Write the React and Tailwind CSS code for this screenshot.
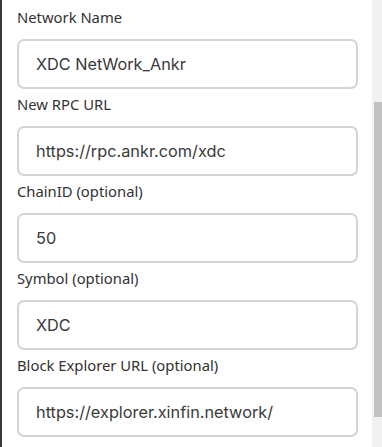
import React from 'react';

const fields = [
  { label: 'Network Name', value: 'XDC NetWork_Ankr' },
  { label: 'New RPC URL', value: 'https://rpc.ankr.com/xdc' },
  { label: 'ChainID (optional)', value: '50' },
  { label: 'Symbol (optional)', value: 'XDC' },
  { label: 'Block Explorer URL (optional)', value: 'https://explorer.xinfin.network/' },
];

export default function App() {
  return (
    <div className="flex w-[382px] h-[447px] overflow-hidden bg-white">
      <div className="w-[2px] shrink-0 bg-[#3a3a3a]" />
      <div className="flex-1 pl-[15px] pr-[14px] pt-[7px]">
        {fields.map((f, i) => (
          <div key={i} className={i > 0 ? 'mt-[5px]' : ''}>
            <div
              className="h-[20px] leading-[20px] text-[14.8px] text-[#333]"
              style={{ fontFamily: '"Noto Sans", sans-serif' }}
            >
              {f.label}
            </div>
            <div className="mt-[12px] h-[50px] rounded-[7px] border-2 border-[#d4d4d4] flex items-center pl-[17px]">
              <span
                className="text-[16.3px] text-[#3a3a3a]"
                style={{ fontFamily: 'Inter, sans-serif' }}
              >
                {f.value}
              </span>
            </div>
          </div>
        ))}
      </div>
      <div className="w-[10px] shrink-0 bg-[#f1f1f1] pl-[2px]">
        <div className="mt-[102px] h-[315px] bg-[#c1c1c1]" />
      </div>
    </div>
  );
}
